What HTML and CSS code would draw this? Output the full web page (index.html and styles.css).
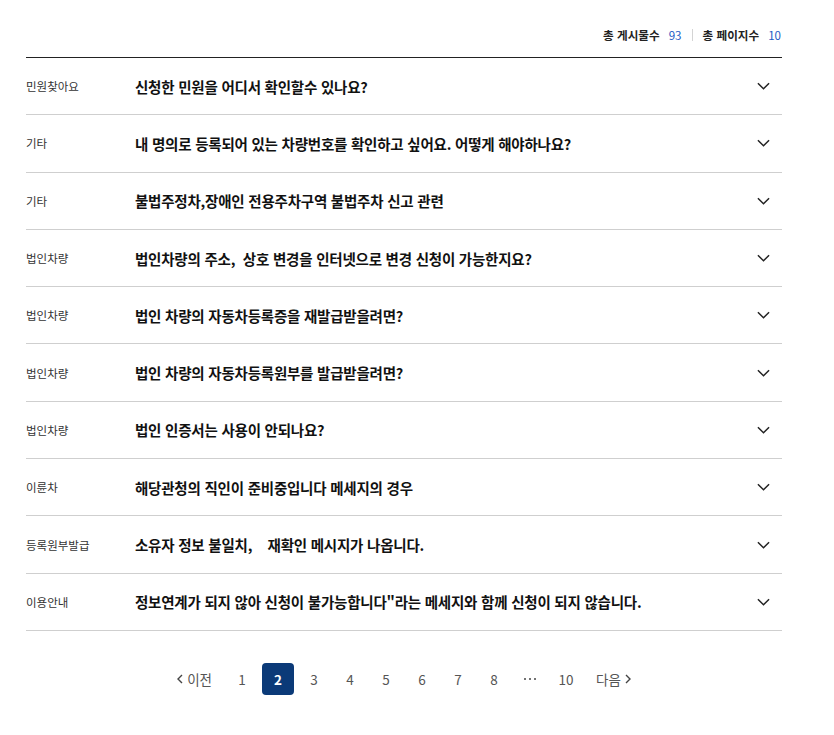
FILE: index.html
```html
<!DOCTYPE html>
<html lang="ko">
<head>
<meta charset="utf-8">
<link rel="stylesheet" href="styles.css">
</head>
<body>
<div class="wrap">
  <div class="summary">
    <span class="lbl">총 게시물수</span><span class="num">93</span>
    <span class="sep"></span>
    <span class="lbl">총 페이지수</span><span class="num">10</span>
  </div>
  <ul class="list">
    <li class="row"><span class="cat">민원찾아요</span><span class="title">신청한 민원을 어디서 확인할수 있나요?</span><svg class="chev" viewBox="0 0 14 8"><path d="M1 1l6 6 6-6"/></svg></li>
    <li class="row"><span class="cat">기타</span><span class="title">내 명의로 등록되어 있는 차량번호를 확인하고 싶어요. 어떻게 해야하나요?</span><svg class="chev" viewBox="0 0 14 8"><path d="M1 1l6 6 6-6"/></svg></li>
    <li class="row"><span class="cat">기타</span><span class="title">불법주정차,장애인 전용주차구역 불법주차 신고 관련</span><svg class="chev" viewBox="0 0 14 8"><path d="M1 1l6 6 6-6"/></svg></li>
    <li class="row"><span class="cat">법인차량</span><span class="title">법인차량의 주소,&nbsp; 상호 변경을 인터넷으로 변경 신청이 가능한지요?</span><svg class="chev" viewBox="0 0 14 8"><path d="M1 1l6 6 6-6"/></svg></li>
    <li class="row"><span class="cat">법인차량</span><span class="title">법인 차량의 자동차등록증을 재발급받을려면?</span><svg class="chev" viewBox="0 0 14 8"><path d="M1 1l6 6 6-6"/></svg></li>
    <li class="row"><span class="cat">법인차량</span><span class="title">법인 차량의 자동차등록원부를 발급받을려면?</span><svg class="chev" viewBox="0 0 14 8"><path d="M1 1l6 6 6-6"/></svg></li>
    <li class="row"><span class="cat">법인차량</span><span class="title">법인 인증서는 사용이 안되나요?</span><svg class="chev" viewBox="0 0 14 8"><path d="M1 1l6 6 6-6"/></svg></li>
    <li class="row"><span class="cat">이륜차</span><span class="title">해당관청의 직인이 준비중입니다 메세지의 경우</span><svg class="chev" viewBox="0 0 14 8"><path d="M1 1l6 6 6-6"/></svg></li>
    <li class="row"><span class="cat">등록원부발급</span><span class="title">소유자 정보 불일치,&nbsp;&nbsp;&nbsp; 재확인 메시지가 나옵니다.</span><svg class="chev" viewBox="0 0 14 8"><path d="M1 1l6 6 6-6"/></svg></li>
    <li class="row"><span class="cat">이용안내</span><span class="title">정보연계가 되지 않아 신청이 불가능합니다"라는 메세지와 함께 신청이 되지 않습니다.</span><svg class="chev" viewBox="0 0 14 8"><path d="M1 1l6 6 6-6"/></svg></li>
  </ul>
  <nav class="pager">
    <a class="pg nav prev"><svg class="arr" viewBox="0 0 6 10"><path d="M5 1L1 5l4 4"/></svg>이전</a>
    <a class="pg">1</a>
    <a class="pg on">2</a>
    <a class="pg">3</a>
    <a class="pg">4</a>
    <a class="pg">5</a>
    <a class="pg">6</a>
    <a class="pg">7</a>
    <a class="pg">8</a>
    <a class="pg dots"><i></i><i></i><i></i></a>
    <a class="pg">10</a>
    <a class="pg nav next">다음<svg class="arr" viewBox="0 0 6 10"><path d="M1 1l4 4-4 4"/></svg></a>
  </nav>
</div>
</body>
</html>
```
FILE: styles.css
```css
* { box-sizing: border-box; }
html, body { margin: 0; padding: 0; background: #fff; }
body {
  font-family: "Noto Sans CJK KR", "Noto Sans", sans-serif;
  color: #111;
}
.wrap {
  width: 756px;
  margin-left: 26px;
  padding-top: 24px;
}
.summary {
  display: flex;
  justify-content: flex-end;
  align-items: center;
  height: 21px;
  font-size: 11.6px;
  margin-bottom: 12px;
  padding-right: 1px;
}
.summary .lbl { font-weight: 700; color: #222; }
.summary .num { color: #1f5cc4; margin-left: 9px; }
.summary .sep {
  width: 1px; height: 12px; background: #d4d4d4;
  margin: 0 10px;
}
.list {
  list-style: none;
  margin: 0;
  padding: 0;
  border-top: 1px solid #222;
}
.row {
  display: flex;
  align-items: center;
  height: 57.3px;
  border-bottom: 1px solid #cfcfcf;
}
.cat {
  width: 109px;
  flex: none;
  font-size: 11.5px;
  color: #333;
}
.title {
  flex: 1;
  font-size: 14.5px;
  font-weight: 700;
  color: #111;
  letter-spacing: -0.22px;
}
.chev {
  width: 13px;
  height: 8px;
  margin-right: 12px;
  fill: none;
  stroke: #222;
  stroke-width: 1.6;
}
.pager {
  display: flex;
  justify-content: center;
  align-items: center;
  gap: 4px;
  margin-top: 32px;
}
.pg {
  width: 32px;
  height: 32px;
  display: flex;
  align-items: center;
  justify-content: center;
  font-size: 13.5px;
  color: #555;
}
.pg.on {
  background: #0b3a78;
  color: #fff;
  font-weight: 700;
  border-radius: 4px;
}
.pg.dots { gap: 3px; }
.pg.dots i { width: 2px; height: 2px; background: #444; border-radius: 1px; }
.pg.nav { width: auto; gap: 4px; color: #555; }
.pg.prev { margin-right: 10px; }
.pg.next { margin-left: 10px; }
.arr { width: 6px; height: 10px; fill: none; stroke: #444; stroke-width: 1.4; }
```
